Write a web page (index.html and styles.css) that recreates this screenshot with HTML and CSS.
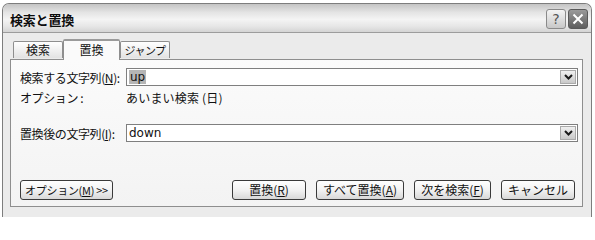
FILE: index.html
```html
<!DOCTYPE html>
<html lang="ja">
<head>
<meta charset="utf-8">
<title>検索と置換</title>
<link rel="stylesheet" href="styles.css">
</head>
<body>
<div class="window">
  <div class="titlebar">
    <span class="title">検索と置換</span>
    <div class="caption-buttons">
      <span class="cap-btn help">?</span>
      <span class="cap-btn close">
        <svg width="12" height="12" viewBox="0 0 12 12"><path d="M1.5 1.5 L10.5 10.5 M10.5 1.5 L1.5 10.5" stroke="#fff" stroke-width="2" fill="none"/></svg>
      </span>
    </div>
  </div>
  <div class="content">
    <div class="tabs">
      <div class="tab">検索</div>
      <div class="tab active">置換</div>
      <div class="tab tab-narrow">ジャンプ</div>
    </div>
    <div class="panel">
      <div class="row">
        <label class="label">検索する文字列(<u>N</u>):</label>
        <div class="combo">
          <span class="value"><span class="sel">up</span></span>
          <span class="drop"><svg width="9" height="6" viewBox="0 0 9 6"><path d="M1 1 L4.5 4.5 L8 1" stroke="#1a1a1a" stroke-width="2" fill="none"/></svg></span>
        </div>
      </div>
      <div class="row option-row">
        <span class="label">オプション :</span>
        <span class="option-value">あいまい検索 (日)</span>
      </div>
      <div class="row replace-row">
        <label class="label">置換後の文字列(<u>I</u>):</label>
        <div class="combo">
          <span class="value">down</span>
          <span class="drop"><svg width="9" height="6" viewBox="0 0 9 6"><path d="M1 1 L4.5 4.5 L8 1" stroke="#1a1a1a" stroke-width="2" fill="none"/></svg></span>
        </div>
      </div>
      <div class="buttons">
        <button class="btn btn-options">オプション(<u>M</u>) &gt;&gt;</button>
        <div class="btn-group">
          <button class="btn w74">置換(<u>R</u>)</button>
          <button class="btn w88">すべて置換(<u>A</u>)</button>
          <button class="btn w77">次を検索(<u>F</u>)</button>
          <button class="btn w74">キャンセル</button>
        </div>
      </div>
    </div>
  </div>
</div>
</body>
</html>
```
FILE: styles.css
```css
html, body {
  margin: 0;
  padding: 0;
  background: #ffffff;
  width: 595px;
  height: 217px;
  overflow: hidden;
}
body {
  font-family: "Noto Sans CJK JP", "Noto Sans", sans-serif;
  font-size: 12px;
  color: #111;
}
.window {
  box-sizing: border-box;
  margin: 3px 0 0 2px;
  width: 590px;
  height: 214px;
  border: 1px solid #7d7d7d;
  border-bottom: none;
  border-radius: 7px 7px 0 0;
  background: #ebebeb;
  overflow: hidden;
  display: flex;
  flex-direction: column;
}
.titlebar {
  box-sizing: border-box;
  height: 29px;
  padding: 2px 3px 0 7px;
  display: flex;
  align-items: center;
  justify-content: space-between;
  background: linear-gradient(#c4c4c4 0%, #e4e4e4 30%, #f4f4f4 55%, #e6e6e6 80%, #d4d4d4 100%);
  border-bottom: 1px solid #9c9c9c;
}
.title {
  font-weight: bold;
  font-size: 13px;
  color: #0d0d0d;
  letter-spacing: -0.2px;
}
.caption-buttons {
  display: flex;
  gap: 2px;
}
.cap-btn {
  box-sizing: border-box;
  width: 20px;
  height: 20px;
  border-radius: 3px;
  display: flex;
  align-items: center;
  justify-content: center;
}
.help {
  border: 1px solid #8a8a8a;
  background: linear-gradient(#f4f4f4, #c8c8c8);
  color: #555;
  font-family: "DejaVu Sans", sans-serif;
  font-size: 14px;
}
.close {
  border: 1px solid #5a5a5a;
  background: linear-gradient(#9a9a9a, #5e5e5e);
}
.content {
  flex: 1;
  padding: 6px 8px 0 7px;
  display: flex;
  flex-direction: column;
}
.tabs {
  display: flex;
  align-items: flex-end;
  margin-left: 3px;
  height: 20px;
  position: relative;
  z-index: 1;
}
.tab {
  box-sizing: border-box;
  width: 50px;
  height: 17px;
  border: 1px solid #8e8e8e;
  border-bottom: none;
  border-radius: 2px 2px 0 0;
  background: linear-gradient(#ffffff, #e2e2e2);
  text-align: center;
  line-height: 16px;
  margin-bottom: 1px;
  white-space: nowrap;
}
.tab-narrow {
  font-size: 11px;
  letter-spacing: -0.5px;
}
.tab.active {
  width: 57px;
  height: 21px;
  margin-bottom: -1px;
  background: #fafafa;
  border-top: 2px solid #9a9a9a;
  line-height: 17px;
}
.panel {
  box-sizing: border-box;
  height: 148px;
  border: 1px solid #8e8e8e;
  background: linear-gradient(#fbfbfb, #f3f3f3);
  padding: 8px 4px 0 9px;
  display: flex;
  flex-direction: column;
}
.row {
  display: flex;
  align-items: center;
}
.label {
  width: 106px;
  flex: none;
  white-space: nowrap;
  letter-spacing: -0.4px;
}
.combo {
  box-sizing: border-box;
  width: 452px;
  height: 18px;
  border: 1px solid #7f7f7f;
  background: #fff;
  display: flex;
  align-items: center;
  justify-content: space-between;
  padding: 0 1px 0 2px;
}
.value {
  font-family: "DejaVu Sans", "Noto Sans", sans-serif;
  font-size: 12px;
  line-height: 14px;
}
.sel {
  background: #b5b5b5;
  padding: 0 1px;
}
.drop {
  box-sizing: border-box;
  width: 16px;
  height: 14px;
  border: 1px solid #aaa;
  background: linear-gradient(#f0f0f0, #c9c9c9);
  display: flex;
  align-items: center;
  justify-content: center;
}
.option-row {
  margin-top: 3px;
  height: 17px;
}
.option-value {
  letter-spacing: 0.2px;
}
.replace-row {
  margin-top: 18px;
}
.buttons {
  margin-top: 38px;
  display: flex;
  justify-content: space-between;
  padding-right: 3px;
}
.btn-group {
  display: flex;
  gap: 10px;
}
.btn {
  box-sizing: border-box;
  height: 20px;
  padding: 0;
  border: 1px solid #3a3a3a;
  border-radius: 3px;
  background: linear-gradient(#ffffff 0%, #f2f2f2 50%, #d8d8d8 100%);
  font-family: "Noto Sans CJK JP", "Noto Sans", sans-serif;
  font-size: 12px;
  color: #111;
  line-height: 16px;
  white-space: nowrap;
}
.btn-options {
  width: 93px;
  font-size: 11px;
  letter-spacing: -0.3px;
}
.w74 { width: 74px; }
.w77 { width: 77px; }
.w88 { width: 88px; }
u { text-decoration: underline; }
```
